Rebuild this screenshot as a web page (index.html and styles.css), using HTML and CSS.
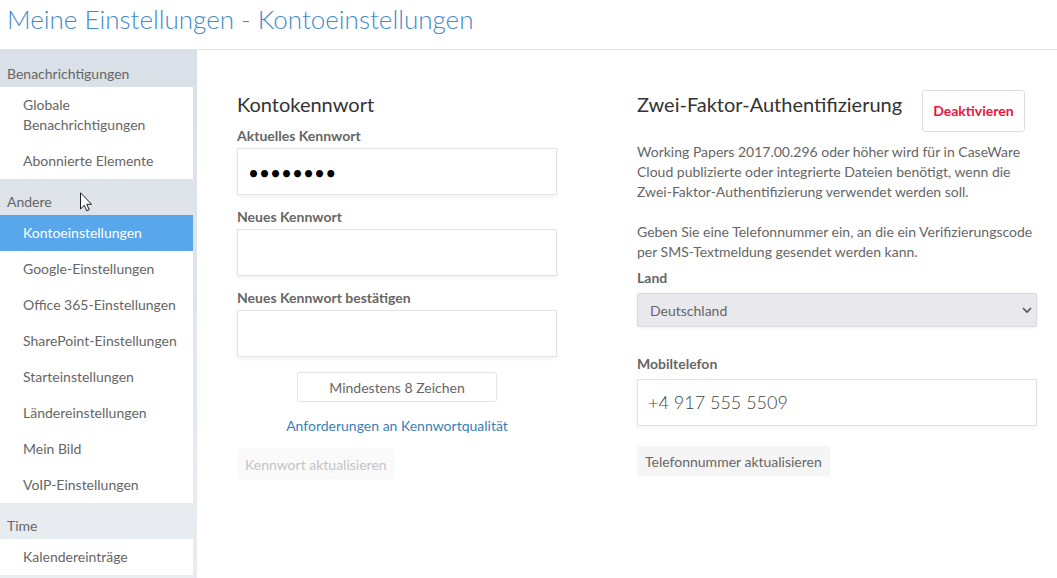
FILE: index.html
```html
<!DOCTYPE html>
<html lang="de">
<head>
<meta charset="utf-8">
<meta name="viewport" content="width=device-width, initial-scale=1">
<title>Meine Einstellungen - Kontoeinstellungen</title>
<link rel="stylesheet" href="styles.css">
</head>
<body>
<header class="page-header">
  <h1 class="page-title">Meine Einstellungen - Kontoeinstellungen</h1>
</header>
<div class="layout">
  <nav class="sidebar" aria-label="Einstellungen">
    <h2 class="nav-heading">Benachrichtigungen</h2>
    <ul class="nav-list">
      <li><a class="nav-link" href="#global">Globale Benachrichtigungen</a></li>
      <li><a class="nav-link" href="#abonniert">Abonnierte Elemente</a></li>
    </ul>
    <h2 class="nav-heading">Andere</h2>
    <ul class="nav-list">
      <li><a class="nav-link is-active" href="#konto" aria-current="page">Kontoeinstellungen</a></li>
      <li><a class="nav-link" href="#google">Google-Einstellungen</a></li>
      <li><a class="nav-link" href="#office">Office 365-Einstellungen</a></li>
      <li><a class="nav-link" href="#sharepoint">SharePoint-Einstellungen</a></li>
      <li><a class="nav-link" href="#start">Starteinstellungen</a></li>
      <li><a class="nav-link" href="#laender">Ländereinstellungen</a></li>
      <li><a class="nav-link" href="#bild">Mein Bild</a></li>
      <li><a class="nav-link" href="#voip">VoIP-Einstellungen</a></li>
    </ul>
    <h2 class="nav-heading">Time</h2>
    <ul class="nav-list">
      <li><a class="nav-link" href="#kalender">Kalendereinträge</a></li>
    </ul>
  </nav>
  <main class="content">
    <form class="password-panel">
      <h2 class="section-title">Kontokennwort</h2>
      <div class="field">
        <label class="label" for="current">Aktuelles Kennwort</label>
        <input class="input input-password" id="current" type="password" value="kennwort" autocomplete="off">
      </div>
      <div class="field">
        <label class="label" for="new">Neues Kennwort</label>
        <input class="input input-password" id="new" type="password" autocomplete="off">
      </div>
      <div class="field">
        <label class="label" for="confirm">Neues Kennwort bestätigen</label>
        <input class="input input-password" id="confirm" type="password" autocomplete="off">
      </div>
      <p class="strength">Mindestens 8 Zeichen</p>
      <a class="quality-link" href="#qualitaet">Anforderungen an Kennwortqualität</a>
      <button class="button" type="submit" disabled>Kennwort aktualisieren</button>
    </form>
    <form class="twofactor-panel">
      <div class="title-row">
        <h2 class="section-title">Zwei-Faktor-Authentifizierung</h2>
        <button class="button-danger" type="button">Deaktivieren</button>
      </div>
      <p class="text">Working Papers 2017.00.296 oder höher wird für in CaseWare Cloud publizierte oder integrierte Dateien benötigt, wenn die Zwei-Faktor-Authentifizierung verwendet werden soll.</p>
      <p class="text">Geben Sie eine Telefonnummer ein, an die ein Verifizierungscode per SMS-Textmeldung gesendet werden kann.</p>
      <div class="country-field">
        <label class="label" for="country">Land</label>
        <div class="select-wrap">
          <select class="select" id="country"><option>Deutschland</option></select>
          <svg class="chevron" viewBox="0 0 10 10" aria-hidden="true"><path d="M1 3 5 7 9 3" /></svg>
        </div>
      </div>
      <div class="phone-field">
        <label class="label" for="phone">Mobiltelefon</label>
        <input class="input input-phone" id="phone" type="tel" value="+4 917 555 5509">
      </div>
      <button class="button" type="submit">Telefonnummer aktualisieren</button>
    </form>
  </main>
</div>
<svg class="pointer" viewBox="0 0 12 20" aria-hidden="true"><path d="M.5 .8V17L4.300 13.300 6.700 18.800 9.200 17.700 6.800 12.300H11.600Z"/></svg>
</body>
</html>
```

FILE: styles.css
```css
* {
  box-sizing: border-box;
}

body {
  display: flex;
  flex-direction: column;
  min-height: 100vh;
  margin: 0;
  background: #fff;
  color: #666;
  font-family: Lato, "Liberation Sans", sans-serif;
  font-size: 14px;
  line-height: 20px;
}

h1, h2, p, ul {
  margin: 0;
  padding: 0;
}

button, input, select {
  font: inherit;
}

.page-header {
  padding: 1px 7px 12px;
  border-bottom: 1px solid #e3e3e3;
}

.page-title {
  color: #428bca;
  font-size: 26px;
  font-weight: 300;
  line-height: 36px;
}

.layout {
  display: flex;
  flex: 1;
}

.sidebar {
  flex: 0 0 197px;
  padding: 1px 4px 3px 0;
  background: linear-gradient(#d9e0e7, #e9edf0);
}

.nav-heading {
  padding: 13px 7px 3px;
  font-size: 14px;
  font-weight: 400;
}

.nav-list {
  background: #fff;
  list-style: none;
}

.nav-link {
  display: block;
  padding: 8px 16px 8px 23px;
  color: #666;
  text-decoration: none;
}

.nav-link.is-active {
  background: #57a7ea;
  color: #fff;
}

.content {
  display: grid;
  flex: 1;
  grid-template-columns: 4fr 5fr;
  align-items: start;
  gap: 80px;
  padding: 40px 20px 20px 40px;
}

.password-panel,
.twofactor-panel {
  display: flex;
  flex-direction: column;
  align-items: flex-start;
}

.section-title {
  color: #333;
  font-size: 20px;
  font-weight: 400;
  line-height: 28px;
}

.password-panel .section-title {
  margin-bottom: 8px;
}

.field,
.country-field,
.phone-field {
  display: flex;
  flex-direction: column;
  align-self: stretch;
}

.field {
  margin-bottom: 12px;
}

.label {
  font-weight: 700;
}

.input {
  width: 100%;
  height: 47px;
  padding: 0 10px;
  border: 1px solid #e3e3e3;
  border-radius: 0;
  background: #fff;
  box-shadow: 0 2px 4px rgba(0, 0, 0, .05);
}

.field .label {
  margin-bottom: 2px;
}

.input-password {
  padding-top: 2px;
  color: #000;
  font-size: 19px;
}

.input-phone {
  padding-bottom: 2px;
  color: #444;
  font-size: 18px;
  font-weight: 300;
}

.strength {
  align-self: center;
  width: 200px;
  margin-top: 3px;
  padding: 5px 0 3px;
  border: 1px solid #e3e3e3;
  border-radius: 3px;
  text-align: center;
}

.quality-link {
  align-self: center;
  margin: 14px 0 13px;
  color: #3a7fb8;
  text-decoration: none;
}

.button {
  padding: 6px 8px 4px;
  border: 0;
  border-radius: 3px;
  background: #f5f5f5;
  color: #666;
}

.button:disabled {
  background: #fafafa;
  color: #c4c4c4;
}

.title-row {
  display: flex;
  align-items: flex-start;
  gap: 20px;
  margin-bottom: 10px;
}

.button-danger {
  padding: 10px;
  border: 1px solid #ddd;
  border-radius: 3px;
  background: #fff;
  color: #ed143d;
  font-weight: 700;
}

.text + .text {
  margin-top: 20px;
}

.country-field {
  gap: 5px;
  margin: 6px 0 27px;
}

.select-wrap {
  position: relative;
}

.select {
  display: block;
  width: 100%;
  height: 34px;
  padding: 2px 28px 0 12px;
  border: 1px solid #d9d9de;
  border-radius: 2px;
  appearance: none;
  background: #e8e8ed;
  box-shadow: 0 1px 3px rgba(0, 0, 0, .06);
  color: #666;
}

.chevron {
  position: absolute;
  top: 12px;
  right: 5px;
  width: 10px;
  height: 10px;
  fill: none;
  stroke: #555;
  stroke-width: 1.6;
  pointer-events: none;
}

.phone-field {
  gap: 5px;
  margin-bottom: 20px;
}

.pointer {
  position: absolute;
  top: 192px;
  left: 80px;
  width: 12px;
  height: 20px;
  fill: #fff;
  stroke: #1c1c2a;
  stroke-width: 1;
  pointer-events: none;
}
```
